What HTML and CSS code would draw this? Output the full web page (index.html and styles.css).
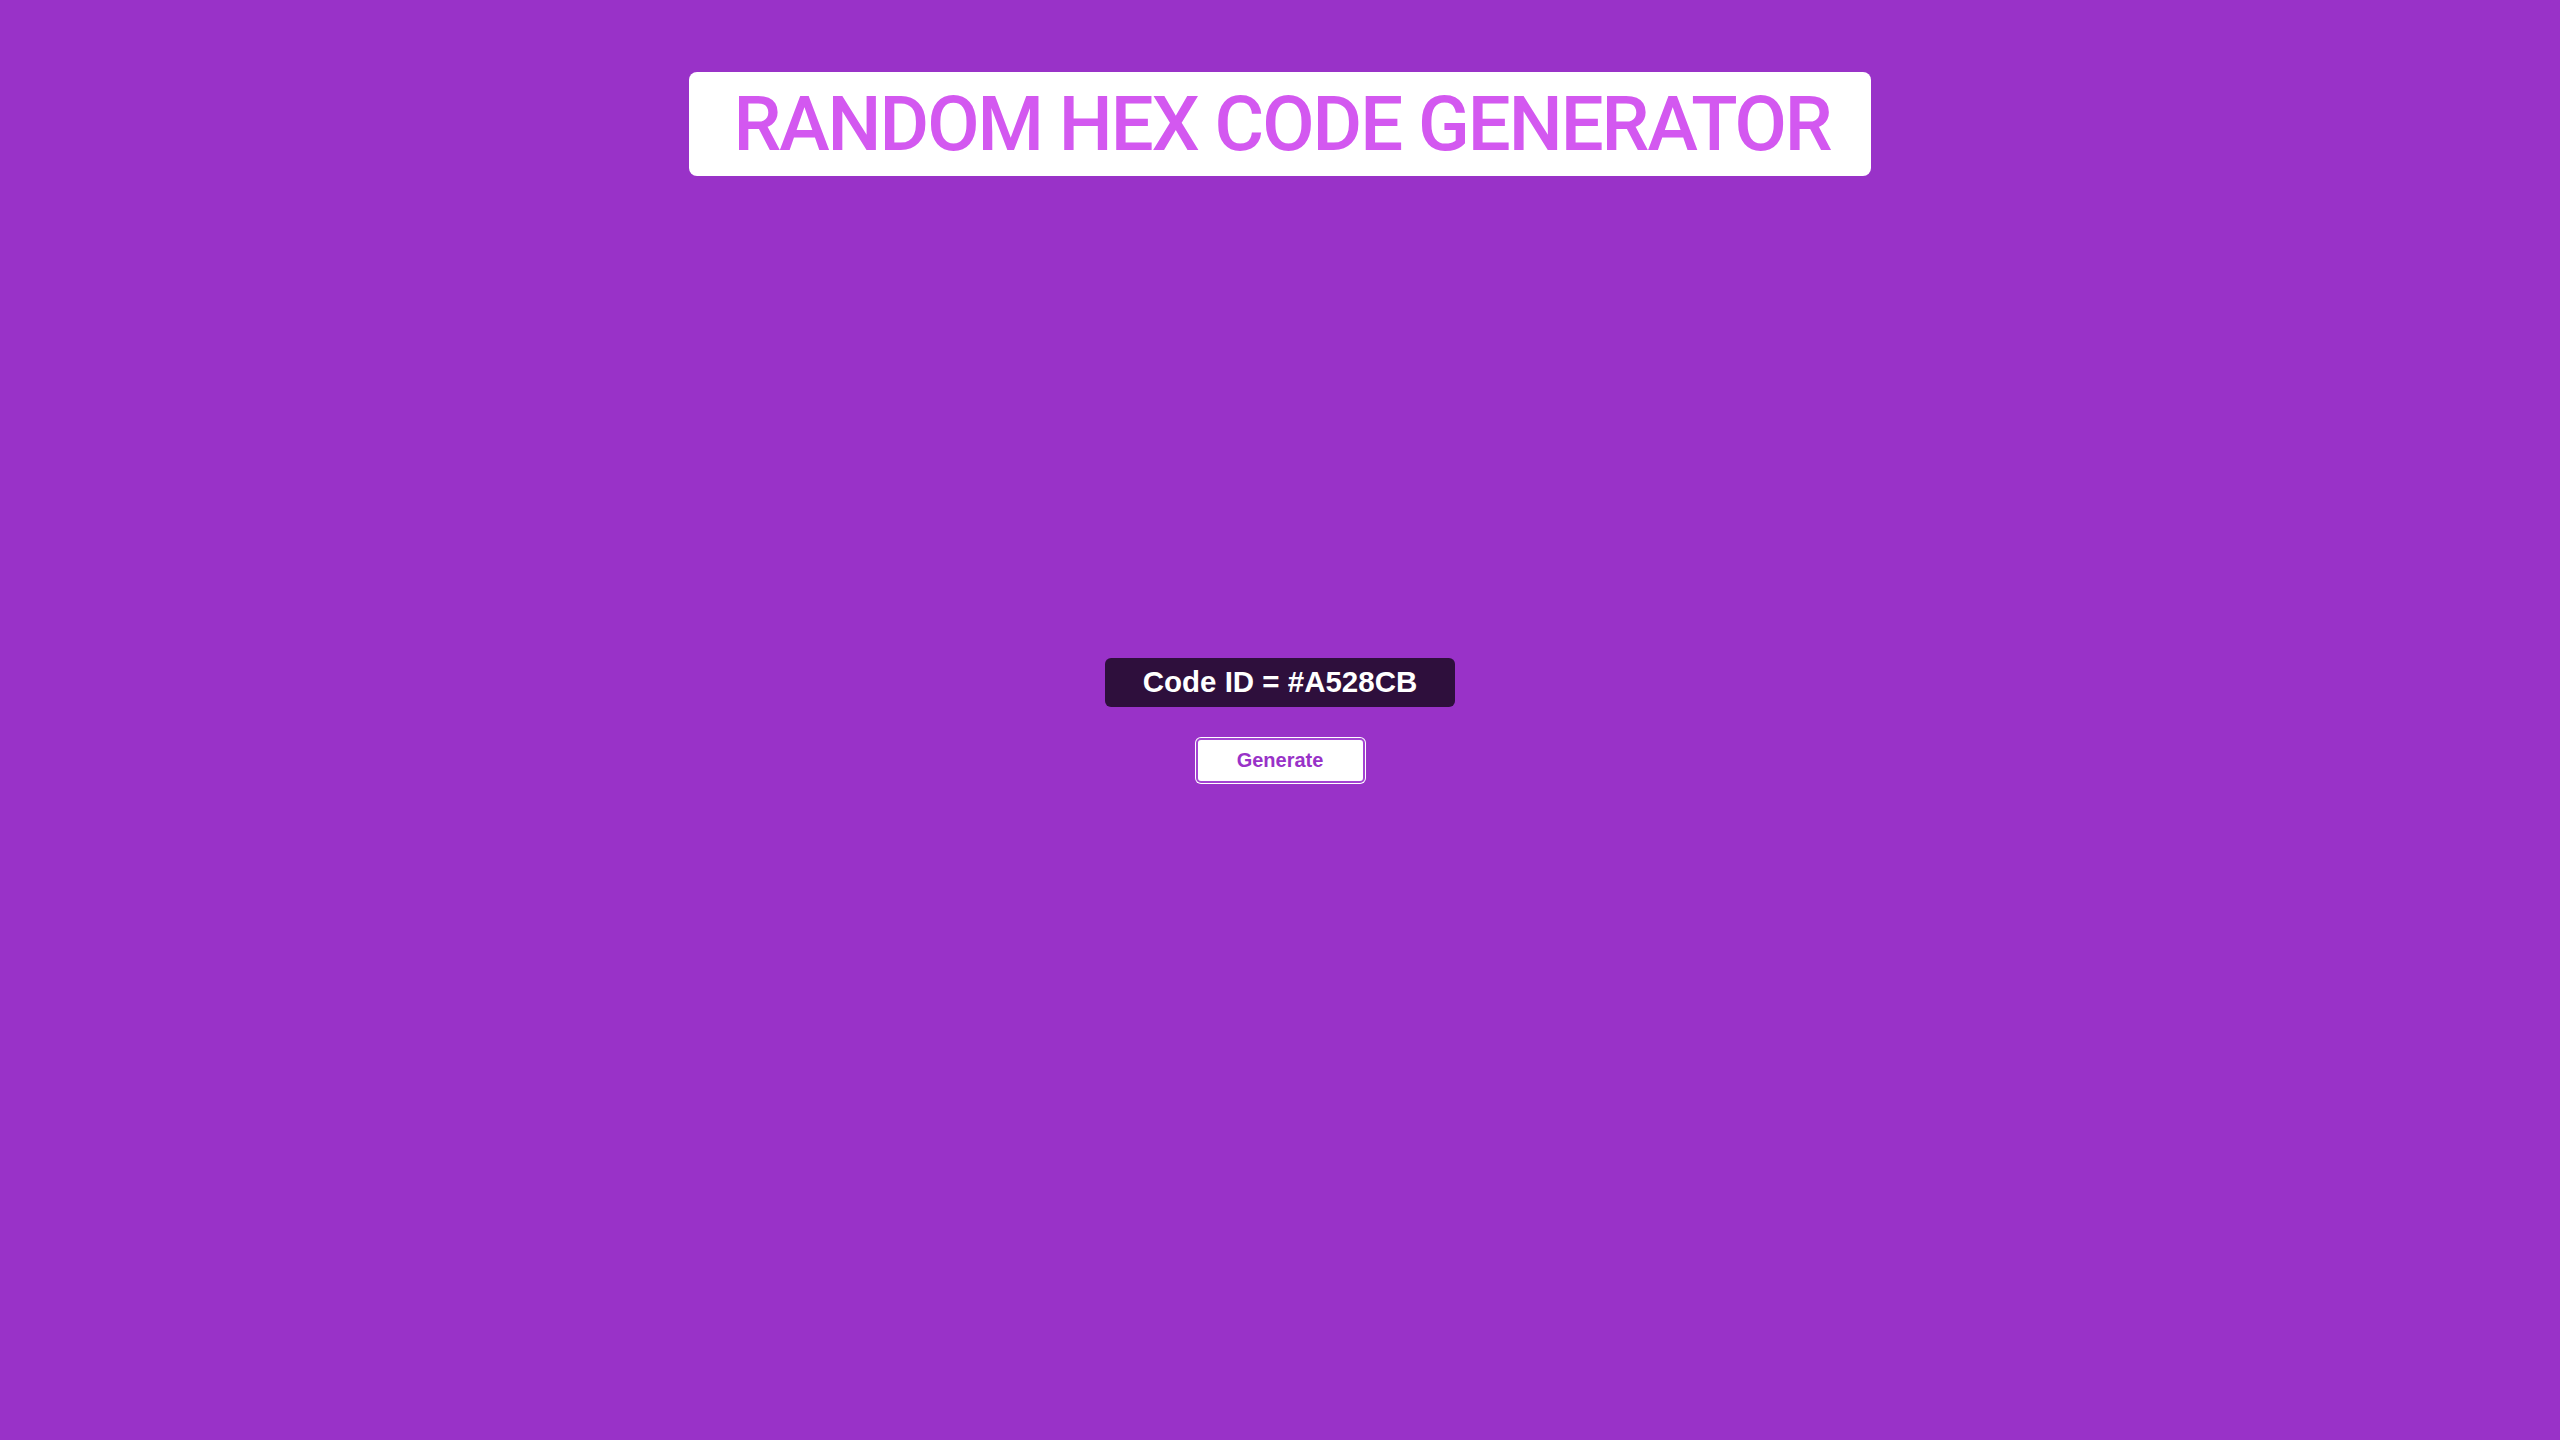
FILE: index.html
```html
<!DOCTYPE html>
<html lang="en">
<head>
<meta charset="utf-8">
<title>Random Hex Code Generator</title>
<link rel="stylesheet" href="styles.css">
</head>
<body>
  <header class="top">
    <h1 class="title">RANDOM HEX CODE GENERATOR</h1>
  </header>
  <main class="center">
    <div class="code">Code ID = #A528CB</div>
    <button class="generate" type="button">Generate</button>
  </main>
  <div class="spacer"></div>
</body>
</html>
```
FILE: styles.css
```css
html, body {
  margin: 0;
  padding: 0;
}
body {
  background: #9932c8;
  height: 100vh;
  display: grid;
  grid-template-rows: 1fr auto 1fr;
  font-family: "Liberation Sans", Arial, sans-serif;
}
.top {
  display: flex;
  justify-content: center;
  align-items: flex-start;
  padding-top: 72px;
}
.title {
  margin: 0;
  background: #ffffff;
  color: #d358f0;
  border-radius: 8px;
  height: 104px;
  padding: 0 40px 0 44px;
  display: flex;
  align-items: center;
  font-family: Roboto, "Noto Sans", sans-serif;
  font-weight: 500;
  font-size: 76px;
  letter-spacing: -2px;
  line-height: 1;
  box-sizing: border-box;
}
.center {
  display: flex;
  flex-direction: column;
  align-items: center;
  gap: 30px;
}
.code {
  background: rgba(0, 0, 0, 0.7);
  color: #ffffff;
  border-radius: 6px;
  height: 49px;
  padding: 0 38px;
  box-sizing: border-box;
  display: flex;
  align-items: center;
  font-weight: 700;
  font-size: 29.5px;
}
.generate {
  width: 169px;
  height: 45px;
  margin-top: 1px;
  background: #ffffff;
  border: 2px solid #a444d2;
  box-shadow: 0 0 0 1px #ffffff;
  border-radius: 5px;
  color: #9932c8;
  font-family: "Liberation Sans", Arial, sans-serif;
  font-weight: 700;
  font-size: 20px;
  padding: 0;
  cursor: pointer;
}
```
